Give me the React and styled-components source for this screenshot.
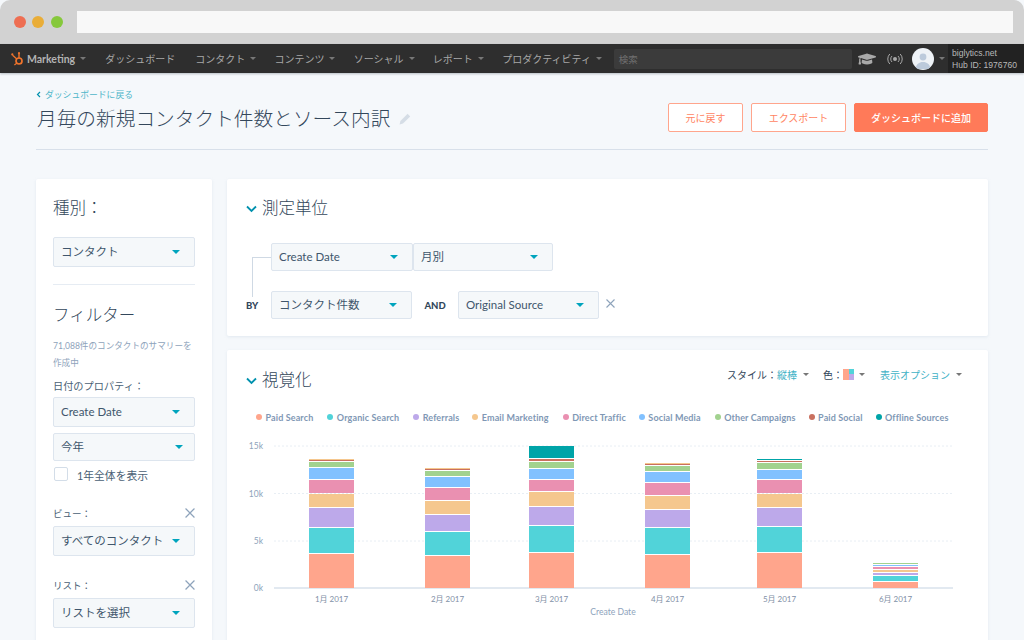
import * as React from 'react'
import styled, { createGlobalStyle } from 'styled-components'
import { FaGraduationCap } from 'react-icons/fa'

const FONT = `Lato, "Noto Sans CJK JP", sans-serif`

const GlobalStyle = createGlobalStyle`
  html, body {
    margin: 0;
    padding: 0;
    background: #fff;
  }
  * {
    box-sizing: border-box;
  }
`

const Window = styled.div`
  width: 1024px;
  height: 640px;
  overflow: hidden;
  display: flex;
  flex-direction: column;
  font-family: ${FONT};
  color: #33475b;
  background: #f5f8fb;
`

const Chrome = styled.div`
  height: 44px;
  flex: none;
  display: flex;
  align-items: center;
  padding: 0 11px 0 14px;
  background: #d2d2d2;
  border-radius: 10px 10px 0 0;
`

const Dot = styled.span`
  width: 12px;
  height: 12px;
  margin-right: ${p => p.$gap}px;
  border-radius: 50%;
  background: ${p => p.$color};
`

const UrlBar = styled.div`
  flex: 1;
  height: 22px;
  background: #f8f8f8;
`

const Nav = styled.div`
  height: 29px;
  flex: none;
  display: flex;
  align-items: center;
  padding-left: 11px;
  background: #2e2e2e;
  box-shadow: 0 1px 2px rgba(90, 100, 110, .4);
  position: relative;
`

const Brand = styled.div`
  display: flex;
  align-items: center;
  font-size: 10.5px;
  font-weight: 700;
  color: #b4b4b4;
  margin-right: 19px;
`

const BrandMark = styled.svg`
  margin-right: 3px;
`

const NavItem = styled.div`
  display: flex;
  align-items: center;
  font-size: 10px;
  color: #a8a8a8;
  margin-right: ${p => p.$gap ?? 18.3}px;
  white-space: nowrap;
`

const NavCaret = styled.span`
  width: 0;
  height: 0;
  margin-left: ${p => p.$left ?? 5}px;
  border-left: 3.5px solid transparent;
  border-right: 3.5px solid transparent;
  border-top: 3.5px solid #777;
`

const Search = styled.div`
  width: 238px;
  height: 20px;
  flex: none;
  margin-left: -6.5px;
  padding-left: 5px;
  display: flex;
  align-items: center;
  font-size: 9.5px;
  color: #707070;
  background: #3b3b3b;
  border-radius: 2px;
`

const NavIcons = styled.div`
  display: flex;
  align-items: center;
  flex: none;
  margin-left: 6px;
  color: #a9a9a9;
`

const Avatar = styled.div`
  width: 22px;
  height: 22px;
  margin-left: 9px;
  border-radius: 50%;
  overflow: hidden;
  background: #eef2f6;
`

const Account = styled.div`
  margin-left: auto;
  width: 76px;
  height: 29px;
  flex: none;
  padding: 3px 0 0 4px;
  font-family: "Liberation Sans", sans-serif;
  font-size: 8.6px;
  line-height: 12px;
  color: #b8b8b8;
  background: #222;
  white-space: nowrap;
`

const Page = styled.div`
  flex: 1;
  min-height: 0;
  padding: 0 36px;
`

const Header = styled.div`
  height: 77px;
  display: flex;
  justify-content: space-between;
  border-bottom: 1px solid #d8e0ea;
`

const Back = styled.div`
  display: flex;
  align-items: center;
  gap: 4px;
  height: 12px;
  margin-top: 15px;
  font-size: 8.8px;
  color: #4fb6c9;
`

const Title = styled.h1`
  display: flex;
  align-items: center;
  margin: 4px 0 0 1px;
  font-size: 19.7px;
  line-height: 30px;
  font-weight: 300;
  color: #33475b;
  white-space: nowrap;
`

const Actions = styled.div`
  display: flex;
  gap: 8px;
  margin-top: 30px;
  height: 29px;
`

const Button = styled.div`
  width: ${p => p.$width}px;
  display: flex;
  align-items: center;
  justify-content: center;
  font-size: 10px;
  font-weight: ${p => (p.$primary ? 500 : 400)};
  color: ${p => (p.$primary ? '#fff' : '#ff8563')};
  background: ${p => (p.$primary ? '#ff7a59' : '#fff')};
  border: 1px solid ${p => (p.$primary ? '#ff7a59' : '#ffa58c')};
  border-radius: 2px;
`

const Columns = styled.div`
  display: flex;
  gap: 15px;
  margin-top: 29px;
  align-items: flex-start;
`

const Card = styled.div`
  background: #fff;
  border-radius: 2px;
  box-shadow: 0 1px 3px rgba(190, 205, 220, .35);
`

const Sidebar = styled(Card)`
  width: 176px;
  height: 480px;
  flex: none;
  padding: 17px 17px 0;
`

const SideHeading = styled.h2`
  margin: 0;
  font-size: 16.5px;
  line-height: 24px;
  font-weight: 300;
  color: #33475b;
`

const Rule = styled.div`
  height: 1px;
  margin: 17px 0 18px;
  background: #e6ecf3;
`

const Summary = styled.p`
  margin: 11px 0 0;
  font-size: 8.6px;
  line-height: 17px;
  color: #8ea3bb;
`

const FieldLabel = styled.div`
  display: flex;
  justify-content: space-between;
  align-items: center;
  height: 14px;
  margin-top: ${p => p.$top}px;
  margin-bottom: ${p => p.$bottom}px;
  font-size: ${p => p.$size || 9.5}px;
  color: #4a5f75;
`

const Select = styled.div`
  width: ${p => p.$width || 142}px;
  height: ${p => p.$height || 30}px;
  margin-top: ${p => p.$top || 0}px;
  padding: 0 ${p => p.$right || 14}px 0 7px;
  flex: none;
  display: flex;
  align-items: center;
  justify-content: space-between;
  font-size: 11.5px;
  color: #40566c;
  background: #f5f8fa;
  border: 1px solid #dde5ee;
  border-radius: 2px;
  white-space: nowrap;
`

const SelectValue = styled.span`
  margin-bottom: 2px;
`

const Caret = styled.span`
  width: 0;
  height: 0;
  border-left: 4.5px solid transparent;
  border-right: 4.5px solid transparent;
  border-top: 4.5px solid #00a4bd;
`

const CheckRow = styled.div`
  display: flex;
  align-items: center;
  gap: 9px;
  height: 15px;
  margin: 5px 0 0 1px;
  font-size: 10.8px;
  color: #4a5f75;
`

const CheckText = styled.span`
  margin-top: 3px;
`

const Checkbox = styled.span`
  width: 14px;
  height: 14px;
  background: #fff;
  border: 1px solid #d3dde8;
  border-radius: 2px;
`

const Main = styled.div`
  flex: 1;
  display: flex;
  flex-direction: column;
  gap: 14px;
`

const Section = styled.div`
  display: flex;
  align-items: center;
  gap: 5px;
  height: 24px;
  font-size: 16.5px;
  font-weight: 300;
  color: #33475b;
`

const MeasureCard = styled(Card)`
  height: 157px;
  padding: 16px 0 0 19px;
`

const Builder = styled.div`
  display: grid;
  grid-template-columns: 25px auto;
  grid-template-rows: 28px 28px;
  row-gap: 20px;
  margin-top: 24px;
`

const Connector = styled.div`
  width: 19px;
  height: 40px;
  margin: 14px 0 0 6px;
  grid-row: 1 / 3;
  grid-column: 1;
  border-top: 1px solid #cfd9e4;
  border-left: 1px solid #cfd9e4;
`

const By = styled.div`
  grid-row: 2;
  grid-column: 1;
  align-self: center;
  font-size: 9.5px;
  font-weight: 900;
  color: #33475b;
  height: 13px;
  line-height: 13px;
`

const BuilderRow = styled.div`
  grid-column: 2;
  grid-row: ${p => p.$row};
  display: flex;
  align-items: center;
`

const And = styled.div`
  width: 46px;
  text-align: center;
  font-size: 9.5px;
  font-weight: 900;
  color: #33475b;
`

const RemoveSlot = styled.span`
  display: flex;
  margin: 0 0 3px 7px;
`

const VizCard = styled(Card)`
  height: 300px;
`

const VizHead = styled.div`
  display: flex;
  justify-content: space-between;
  padding: 17px 26px 0 19px;
`

const Controls = styled.div`
  display: flex;
  align-items: center;
  height: 14px;
  font-size: 10px;
  color: #33475b;
`

const ControlGap = styled.span`
  width: ${p => p.$width}px;
`

const Teal = styled.span`
  color: #3fb2c6;
`

const Swatch = styled.span`
  width: 11px;
  height: 11px;
  display: grid;
  grid-template-columns: 1fr 1fr;
  grid-template-rows: 1fr 1fr;
`

const SwatchCell = styled.span`
  background: ${p => p.$color};
  grid-row: ${p => p.$row || 'auto'};
`

const Legend = styled.div`
  display: flex;
  margin: 20px 0 0 29px;
  height: 12px;
`

const LegendItem = styled.div`
  display: flex;
  align-items: center;
  gap: 3.5px;
  margin-right: ${p => p.$gap}px;
  font-size: 9px;
  font-weight: 700;
  letter-spacing: .12px;
  color: #7f98b5;
  white-space: nowrap;
`

const LegendDot = styled.span`
  width: 6px;
  height: 6px;
  border-radius: 50%;
  background: ${p => p.$color};
`

const ChartSvg = styled.svg`
  display: block;
  margin-top: 13px;
  font-family: ${FONT};
`

const COLORS = {
  paid: '#ffa58c',
  organic: '#51d3d9',
  ref: '#bda9ea',
  email: '#f5c78e',
  direct: '#ea90b1',
  social: '#81c1ff',
  other: '#a2d28f',
  paidSocial: '#c9705f',
  offline: '#00a4a8',
}

const LEGEND = [
  ['Paid Search', COLORS.paid, 14],
  ['Organic Search', COLORS.organic, 14],
  ['Referrals', COLORS.ref, 13],
  ['Email Marketing', COLORS.email, 14],
  ['Direct Traffic', COLORS.direct, 13],
  ['Social Media', COLORS.social, 14],
  ['Other Campaigns', COLORS.other, 13],
  ['Paid Social', COLORS.paidSocial, 13],
  ['Offline Sources', COLORS.offline, 0],
]

// y positions read off the screenshot: [top, bottom] per segment
const BARS = [
  { x: 309, w: 45, label: '1月 2017', segs: [['paid', 554, 588], ['organic', 528, 553], ['ref', 508, 527], ['email', 494, 507], ['direct', 480, 493], ['social', 468, 479], ['other', 462, 467], ['paidSocial', 460, 461], ['email', 459, 460]] },
  { x: 425, w: 45, label: '2月 2017', segs: [['paid', 556, 588], ['organic', 532, 555], ['ref', 515, 531], ['email', 501, 514], ['direct', 488, 500], ['social', 477, 487], ['other', 471, 476], ['paidSocial', 469, 470], ['email', 468, 469]] },
  { x: 529, w: 45, label: '3月 2017', segs: [['paid', 553, 588], ['organic', 526, 552], ['ref', 507, 525], ['email', 492, 506], ['direct', 480, 491], ['social', 469, 479], ['other', 462, 468], ['paidSocial', 459, 461], ['offline', 446, 458]] },
  { x: 645, w: 45, label: '4月 2017', segs: [['paid', 555, 588], ['organic', 528, 554], ['ref', 510, 527], ['email', 496, 509], ['direct', 483, 495], ['social', 472, 482], ['other', 466, 471], ['paidSocial', 464, 465], ['email', 463, 464]] },
  { x: 757, w: 45, label: '5月 2017', segs: [['paid', 553, 588], ['organic', 527, 552], ['ref', 508, 526], ['email', 494, 507], ['direct', 480, 493], ['social', 470, 479], ['other', 463, 469], ['paidSocial', 461, 462], ['offline', 459, 460]] },
  { x: 873, w: 45, label: '6月 2017', segs: [['paid', 582, 588], ['organic', 576, 581], ['ref', 573, 575], ['email', 570, 572], ['direct', 567, 569], ['social', 565, 566], ['other', 563, 564]] },
]

const TICKS = [['15k', 446], ['10k', 493.5], ['5k', 541], ['0k', 588]]

const Chart = () => (
  <ChartSvg width="761" height="208" viewBox="227 436 761 208">
    {TICKS.map(([label, y]) => (
      <g key={label}>
        <text x="263" y={y + 3} textAnchor="end" fontSize="8.5" fill="#8ea3bb">{label}</text>
        <line
          x1="274"
          x2="953"
          y1={y}
          y2={y}
          stroke={label === '0k' ? '#c5d3e2' : '#e8eef4'}
          strokeDasharray={label === '0k' ? undefined : '2 2'}
        />
      </g>
    ))}
    {BARS.map(bar => (
      <g key={bar.label}>
        {bar.segs.map(([key, top, bottom]) => (
          <rect key={key + top} x={bar.x} y={top} width={bar.w} height={bottom - top} fill={COLORS[key]} />
        ))}
        <text x={bar.x + bar.w / 2} y="602" textAnchor="middle" fontSize="8" fill="#7f8fa6">{bar.label}</text>
      </g>
    ))}
    <text x="613" y="615" textAnchor="middle" fontSize="8.6" fill="#8ea3bb">Create Date</text>
  </ChartSvg>
)

const Sprocket = () => (
  <BrandMark width="13" height="15" viewBox="0 0 13 15" fill="none" stroke="#f0742c">
    <circle cx="8" cy="10" r="3" strokeWidth="1.7" />
    <path d="M8 7V3" strokeWidth="1.4" />
    <circle cx="8" cy="2.2" r="1.1" fill="#f0742c" stroke="none" />
    <path d="M5.8 8 1.6 4.2" strokeWidth="1.3" />
    <circle cx="1.3" cy="3.4" r="1.1" fill="#f0742c" stroke="none" />
    <path d="M5.7 12.2 3.4 14" strokeWidth="1.3" />
  </BrandMark>
)

const Pencil = () => (
  <svg width="12" height="12" viewBox="0 0 12 12" style={{ marginLeft: 9 }}>
    <path d="M8.6.8 11.2 3.4 4 10.6.6 11.4 1.4 8Z" fill="#d5dde6" />
  </svg>
)

const Broadcast = () => (
  <svg width="16" height="12" viewBox="0 0 16 12" fill="none" stroke="#a9a9a9" strokeWidth="1" style={{ marginLeft: 11 }}>
    <circle cx="8" cy="6" r="2" fill="#a9a9a9" stroke="none" />
    <path d="M5 3a4.2 4.2 0 0 0 0 6M11 3a4.2 4.2 0 0 1 0 6M2.8 1a7.2 7.2 0 0 0 0 10M13.2 1a7.2 7.2 0 0 1 0 10" />
  </svg>
)

const AvatarFace = () => (
  <svg width="22" height="22" viewBox="0 0 22 22">
    <circle cx="11" cy="9" r="3.4" fill="#bccadb" />
    <path d="M3.5 21c.6-5 3.6-7 7.5-7s6.9 2 7.5 7Z" fill="#bccadb" />
  </svg>
)

const Chevron = () => (
  <svg width="11" height="8" viewBox="0 0 11 8" fill="none" stroke="#0091ae" strokeWidth="1.8" style={{ marginTop: 4 }}>
    <path d="M1 1.5 5.5 6 10 1.5" />
  </svg>
)

const Cross = ({ size = 9 }) => (
  <svg width={size} height={size} viewBox="0 0 9 9" fill="none" stroke="#8ea3bb" strokeWidth="1.1">
    <path d="M.5.5 8.5 8.5M8.5.5.5 8.5" />
  </svg>
)

const Dropdown = ({ children, ...rest }) => (
  <Select {...rest}>
    <SelectValue>{children}</SelectValue>
    <Caret />
  </Select>
)

const NAV = ['コンタクト', 'コンテンツ', 'ソーシャル', 'レポート', 'プロダクティビティ']

export default function App() {
  return (
    <Window>
      <GlobalStyle />
      <Chrome>
        <Dot $color="#ee6e52" $gap={6} />
        <Dot $color="#e9ad38" $gap={7} />
        <Dot $color="#86c83c" $gap={14} />
        <UrlBar />
      </Chrome>
      <Nav>
        <Brand>
          <Sprocket />
          Marketing
          <NavCaret />
        </Brand>
        <NavItem $gap={20}>ダッシュボード</NavItem>
        {NAV.map(item => (
          <NavItem key={item}>
            {item}
            <NavCaret />
          </NavItem>
        ))}
        <Search>検索</Search>
        <NavIcons>
          <FaGraduationCap size={18} />
          <Broadcast />
          <Avatar><AvatarFace /></Avatar>
          <NavCaret />
        </NavIcons>
        <Account>
          biglytics.net<br />
          Hub ID: 1976760
        </Account>
      </Nav>
      <Page>
        <Header>
          <div>
            <Back>
              <svg width="5" height="7" viewBox="0 0 5 7" fill="none" stroke="#0091ae" strokeWidth="1.2">
                <path d="M4 1 1.5 3.5 4 6" />
              </svg>
              ダッシュボードに戻る
            </Back>
            <Title>
              月毎の新規コンタクト件数とソース内訳
              <Pencil />
            </Title>
          </div>
          <Actions>
            <Button $width={75}>元に戻す</Button>
            <Button $width={95}>エクスポート</Button>
            <Button $width={134} $primary>ダッシュボードに追加</Button>
          </Actions>
        </Header>
        <Columns>
          <Sidebar>
            <SideHeading>種別：</SideHeading>
            <Dropdown $top={17}>コンタクト</Dropdown>
            <Rule />
            <SideHeading>フィルター</SideHeading>
            <Summary>71,088件のコンタクトのサマリーを<br />作成中</Summary>
            <FieldLabel $top={6} $bottom={5} $size={10.2}>日付のプロパティ：</FieldLabel>
            <Dropdown>Create Date</Dropdown>
            <Dropdown $top={6} $height={28} $right={11}>今年</Dropdown>
            <CheckRow>
              <Checkbox />
              <CheckText>1年全体を表示</CheckText>
            </CheckRow>
            <FieldLabel $top={25} $bottom={6}>
              ビュー：
              <Cross size={10} />
            </FieldLabel>
            <Dropdown>すべてのコンタクト</Dropdown>
            <FieldLabel $top={22} $bottom={6}>
              リスト：
              <Cross size={10} />
            </FieldLabel>
            <Dropdown>リストを選択</Dropdown>
          </Sidebar>
          <Main>
            <MeasureCard>
              <Section>
                <Chevron />
                測定単位
              </Section>
              <Builder>
                <Connector />
                <By>BY</By>
                <BuilderRow $row={1}>
                  <Dropdown $height={28} $width={142}>Create Date</Dropdown>
                  <Dropdown $height={28} $width={140}>月別</Dropdown>
                </BuilderRow>
                <BuilderRow $row={2}>
                  <Dropdown $height={28} $width={141}>コンタクト件数</Dropdown>
                  <And>AND</And>
                  <Dropdown $height={28} $width={141}>Original Source</Dropdown>
                  <RemoveSlot><Cross size={9} /></RemoveSlot>
                </BuilderRow>
              </Builder>
            </MeasureCard>
            <VizCard>
              <VizHead>
                <Section>
                  <Chevron />
                  視覚化
                </Section>
                <Controls>
                  スタイル：<Teal>縦棒</Teal>
                  <NavCaret $left={6} />
                  <ControlGap $width={14} />
                  色：
                  <Swatch>
                    <SwatchCell $color={COLORS.paid} $row="1 / 3" />
                    <SwatchCell $color={COLORS.organic} />
                    <SwatchCell $color={COLORS.ref} />
                  </Swatch>
                  <NavCaret />
                  <ControlGap $width={15} />
                  <Teal>表示オプション</Teal>
                  <NavCaret $left={6} />
                </Controls>
              </VizHead>
              <Legend>
                {LEGEND.map(([name, color, gap]) => (
                  <LegendItem key={name} $gap={gap}>
                    <LegendDot $color={color} />
                    {name}
                  </LegendItem>
                ))}
              </Legend>
              <Chart />
            </VizCard>
          </Main>
        </Columns>
      </Page>
    </Window>
  )
}
